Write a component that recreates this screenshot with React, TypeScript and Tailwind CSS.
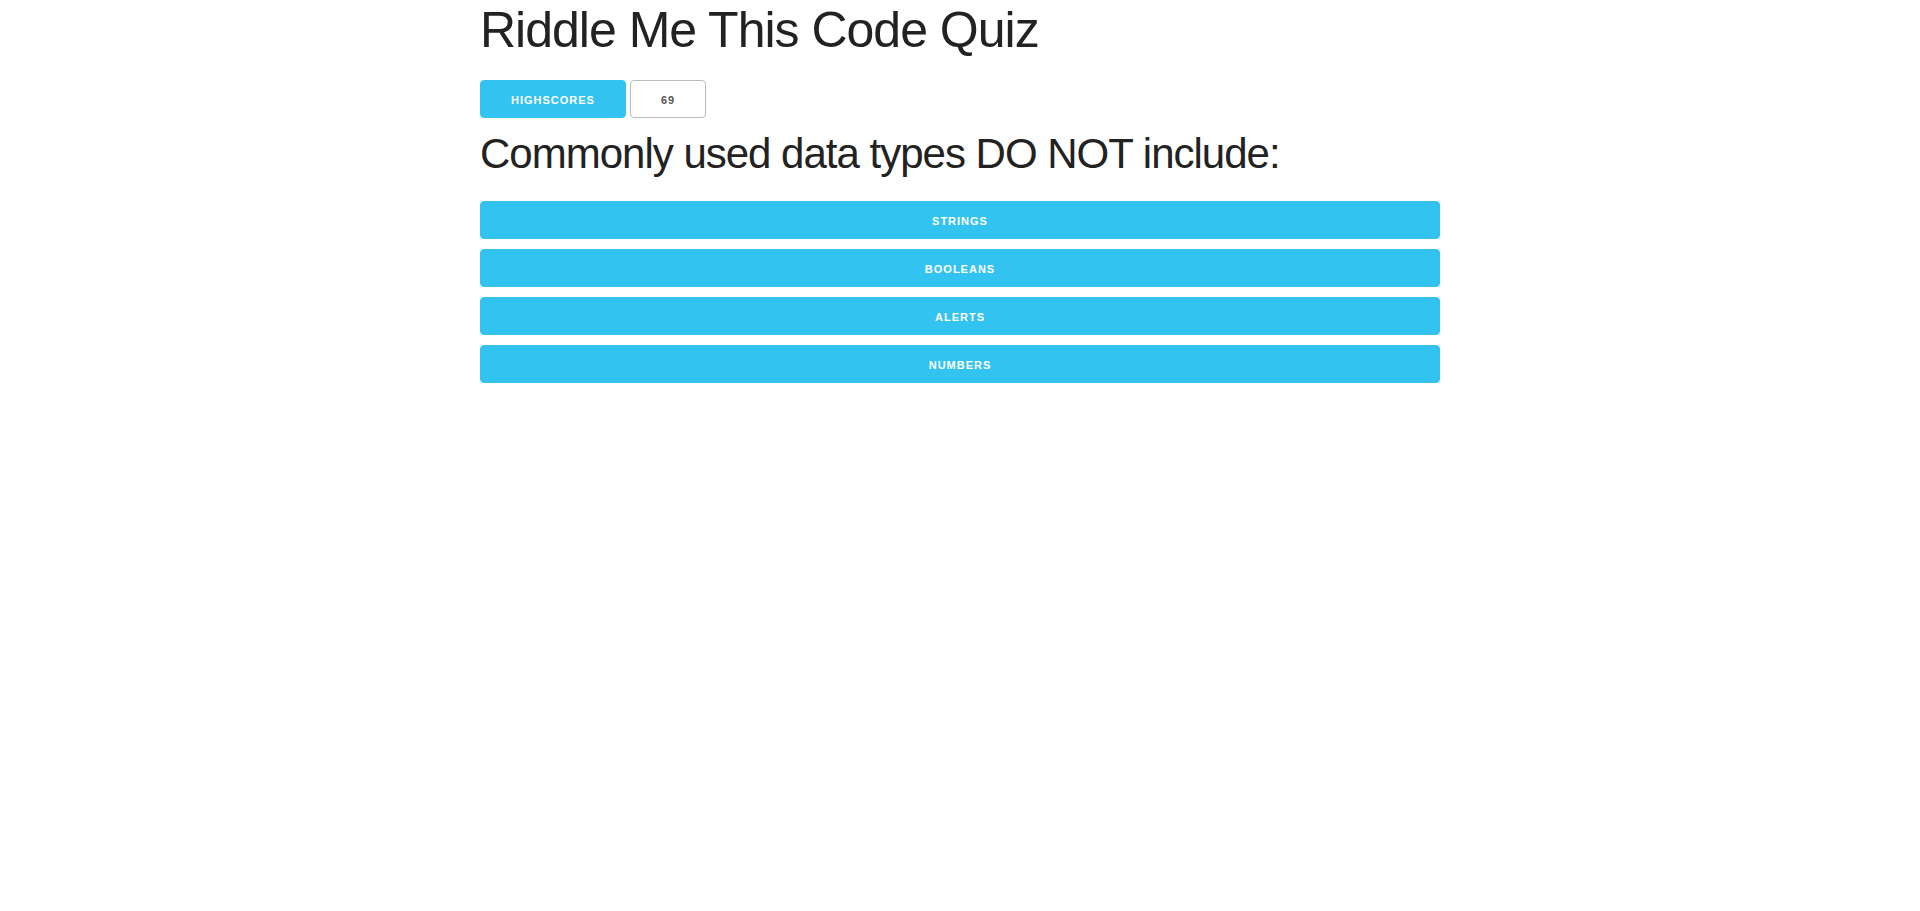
import React from "react";

const btnBase =
  "inline-block h-[38px] px-[30px] text-center text-[11px] font-semibold leading-[38px] tracking-[1px] uppercase whitespace-nowrap rounded-[4px] border border-solid box-border";

export default function App() {
  const answers = ["Strings", "Booleans", "Alerts", "Numbers"];
  return (
    <div
      className="min-h-[911px] bg-white text-[#222]"
      style={{ fontFamily: '"Liberation Sans", Arial, Helvetica, sans-serif' }}
    >
      <div className="mx-auto w-[960px]">
        <h1 className="m-0 mb-[20px] text-[50px] leading-[60px] font-light tracking-[-1px] text-[#222]">
          Riddle Me This Code Quiz
        </h1>
        <div className="flex gap-[4px] mb-[10px]">
          <button
            className={`${btnBase} bg-[#33C3F0] border-[#33C3F0] text-white`}
          >
            Highscores
          </button>
          <button className={`${btnBase} bg-transparent border-[#bbb] text-[#555]`}>
            69
          </button>
        </div>
        <h2 className="m-0 mb-[20px] text-[42px] leading-[52.5px] font-light tracking-[-1px] text-[#222]">
          Commonly used data types DO NOT include:
        </h2>
        <div className="flex flex-col gap-[10px]">
          {answers.map((a) => (
            <button
              key={a}
              className={`${btnBase} w-full bg-[#33C3F0] border-[#33C3F0] text-white`}
            >
              {a}
            </button>
          ))}
        </div>
      </div>
    </div>
  );
}
